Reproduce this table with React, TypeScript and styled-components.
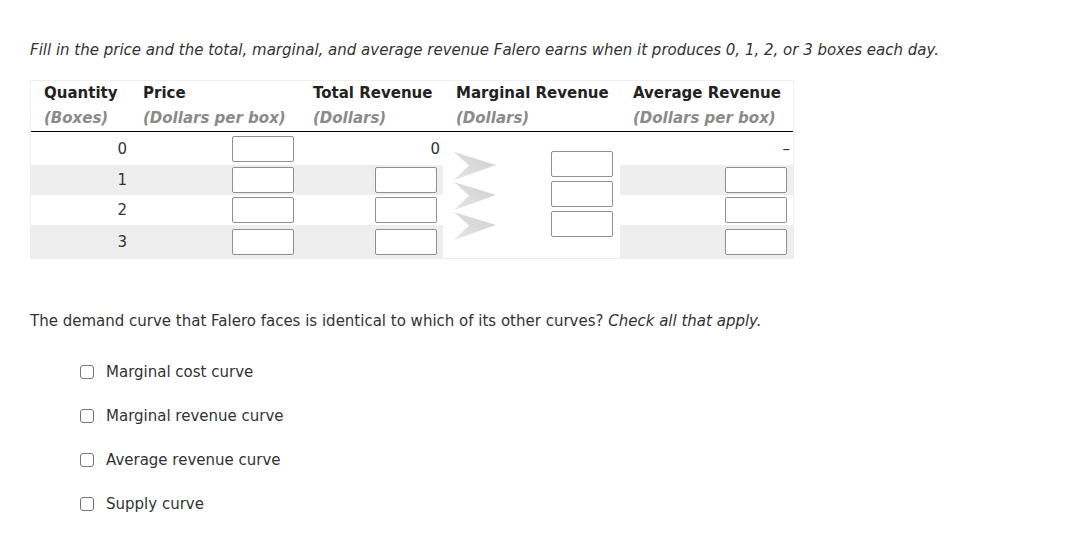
import { FC } from 'react';
import styled, { createGlobalStyle } from 'styled-components';

const GlobalStyle = createGlobalStyle`
  body {
    margin: 0;
    background: #fff;
    font-family: Verdana, "DejaVu Sans", sans-serif;
    font-size: 15px;
    color: #333;
  }
`;

const rows = [
  { q: 0, tr: '0', ar: '–' },
  { q: 1 },
  { q: 2 },
  { q: 3 },
];

const App: FC = () => {
  return (
    <>
      <GlobalStyle />
      <Page>
        <Intro>
          Fill in the price and the total, marginal, and average revenue Falero earns when it
          produces 0, 1, 2, or 3 boxes each day.
        </Intro>

        <Grid>
          <Head>Quantity</Head>
          <Head>Price</Head>
          <Head>Total Revenue</Head>
          <Head>Marginal Revenue</Head>
          <Head>Average Revenue</Head>
          <Unit>(Boxes)</Unit>
          <Unit>(Dollars per box)</Unit>
          <Unit>(Dollars)</Unit>
          <Unit>(Dollars)</Unit>
          <Unit>(Dollars per box)</Unit>

          {rows.map((r, i) => (
            <Row key={r.q} r={r} i={i} />
          ))}
        </Grid>

        <Question>
          The demand curve that Falero faces is identical to which of its other curves?{' '}
          <em>Check all that apply.</em>
        </Question>

        <Options>
          {['Marginal cost curve', 'Marginal revenue curve', 'Average revenue curve', 'Supply curve'].map(
            (label) => (
              <Option key={label}>
                <Check type="checkbox" />
                {label}
              </Option>
            ),
          )}
        </Options>
      </Page>
    </>
  );
};

type RowProps = { r: { q: number; tr?: string; ar?: string }; i: number };

const Row: FC<RowProps> = ({ r, i }) => {
  const shade = i % 2 === 1;
  return (
    <>
      <Cell $shade={shade}>{r.q}</Cell>
      <Cell $shade={shade}>
        <Box />
      </Cell>
      <Cell $shade={shade}>{r.tr ?? <Box />}</Cell>
      {i === 0 && (
        <MarginalCell>
          <Chevrons width="44" height="90" viewBox="0 0 44 90">
            <defs>
              <linearGradient id="chev" x1="0" y1="1" x2="1" y2="0">
                <stop offset="0" stopColor="#e6e6e6" />
                <stop offset="1" stopColor="#cfcfcf" />
              </linearGradient>
            </defs>
            {[0, 30, 60].map((y) => (
              <polygon
                key={y}
                points={`0,${y} 42,${y + 13} 0,${y + 28} 15,${y + 13.5}`}
                fill="url(#chev)"
              />
            ))}
          </Chevrons>
          <MarginalBoxes>
            <Box />
            <Box />
            <Box />
          </MarginalBoxes>
        </MarginalCell>
      )}
      <Cell $shade={shade}>{r.ar ?? <Box />}</Cell>
    </>
  );
};

export default App;

const Page = styled.div`
  padding: 41px 30px 0;
`;

const Intro = styled.p`
  margin: 0;
  font-style: italic;
  line-height: 18px;
`;

const Grid = styled.div`
  display: grid;
  width: max-content;
  margin-top: 21px;
  grid-template-columns: 99px 170px 143px 177px 173px;
  grid-template-rows: 24px 27px 33px 30px 30px 33px;
  border: 1px solid #eee;
`;

const Head = styled.div`
  display: flex;
  align-items: center;
  padding-left: 13px;
  font-weight: bold;
  color: #222;
`;

const Unit = styled.div`
  display: flex;
  align-items: center;
  padding-left: 13px;
  font-weight: bold;
  font-style: italic;
  color: #8a8a8a;
  border-bottom: 1px solid #000;
`;

const Cell = styled.div<{ $shade: boolean }>`
  display: flex;
  align-items: center;
  justify-content: flex-end;
  padding-right: 3px;
  background: ${(p) => (p.$shade ? '#eee' : '#fff')};
  color: #333;
`;

const Box = styled.input`
  box-sizing: border-box;
  width: 62px;
  height: 26px;
  margin: 0 3px 0 0;
  border: 1px solid #8f8f8f;
  border-radius: 2px;
  background: #fff;
`;

const MarginalCell = styled.div`
  grid-row: span 4;
  display: flex;
  align-items: flex-start;
  padding-left: 11px;
  background: #fff;
`;

const Chevrons = styled.svg`
  margin-top: 20px;
`;

const MarginalBoxes = styled.div`
  display: flex;
  flex-direction: column;
  gap: 4px;
  margin: 19px 0 0 53px;
`;

const Question = styled.p`
  margin: 53px 0 0;
  line-height: 18px;
`;

const Options = styled.div`
  display: flex;
  flex-direction: column;
  margin: 20px 0 0 50px;
`;

const Option = styled.label`
  display: flex;
  align-items: center;
  height: 44px;
  gap: 12px;
`;

const Check = styled.input`
  appearance: none;
  box-sizing: border-box;
  width: 14px;
  height: 14px;
  margin: 0;
  border: 1px solid #767676;
  border-radius: 3px;
  background: #fff;
`;
